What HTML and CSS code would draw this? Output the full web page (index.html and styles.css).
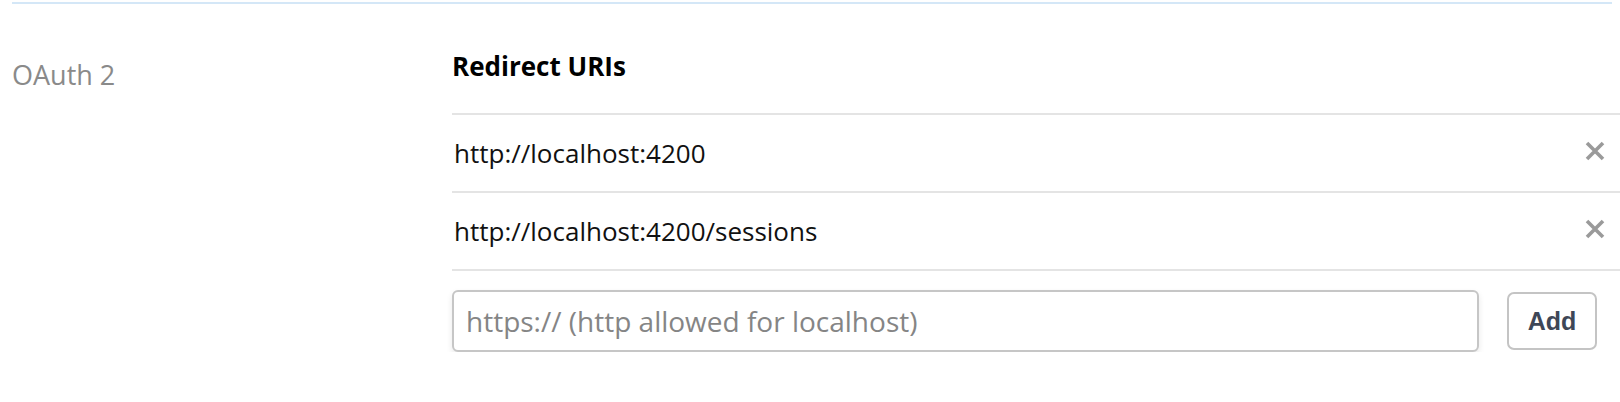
FILE: index.html
```html
<!DOCTYPE html>
<html lang="en">
<head>
<meta charset="utf-8">
<title>OAuth 2 Redirect URIs</title>
<link rel="stylesheet" href="styles.css">
</head>
<body>
<div class="top-rule"></div>
<section class="section">
  <div class="label">OAuth 2</div>
  <div class="content">
    <h3 class="heading">Redirect URIs</h3>
    <ul class="uri-list">
      <li class="uri-row">
        <span class="uri">http://localhost:4200</span>
        <button class="remove" type="button" aria-label="Remove">
          <svg viewBox="0 0 20 20" width="20" height="20"><path d="M2 2 L18 18 M18 2 L2 18" /></svg>
        </button>
      </li>
      <li class="uri-row">
        <span class="uri">http://localhost:4200/sessions</span>
        <button class="remove" type="button" aria-label="Remove">
          <svg viewBox="0 0 20 20" width="20" height="20"><path d="M2 2 L18 18 M18 2 L2 18" /></svg>
        </button>
      </li>
      <li class="add-row">
        <input class="uri-input" type="text" placeholder="https:// (http allowed for localhost)">
        <button class="add-btn" type="button">Add</button>
      </li>
    </ul>
  </div>
</section>
</body>
</html>
```

FILE: styles.css
```css
html, body {
  margin: 0;
  padding: 0;
  background: #ffffff;
  overflow: hidden;
}

body {
  font-family: "Open Sans", "Noto Sans", sans-serif;
  color: #111111;
}

.top-rule {
  height: 2px;
  margin: 2px 8px 0 12px;
  background: #d4e7f7;
}

.section {
  display: grid;
  grid-template-columns: 440px 1fr;
  padding: 46px 0 0 12px;
}

.label {
  margin-top: 7px;
  font-size: 27px;
  line-height: 36px;
  color: #8a8a8a;
}

.heading {
  margin: 0 0 31px 0;
  font-size: 26px;
  line-height: 32px;
  font-weight: 700;
  color: #000000;
}

.uri-list {
  list-style: none;
  margin: 0;
  padding: 0;
}

.uri-row {
  display: flex;
  align-items: center;
  justify-content: space-between;
  height: 76px;
  border-top: 2px solid #e4e4e4;
  padding: 0 15px 0 2px;
}

.uri {
  font-size: 26px;
  line-height: 36px;
  color: #111111;
}

.remove {
  display: flex;
  padding: 0;
  margin: 0 0 4px 0;
  border: 0;
  background: none;
  cursor: pointer;
}

.remove path {
  stroke: #9a9a9a;
  stroke-width: 3.6;
  fill: none;
}

.add-row {
  display: flex;
  align-items: center;
  gap: 28px;
  border-top: 2px solid #e4e4e4;
  padding: 19px 23px 0 0;
}

.uri-input {
  flex: 1;
  box-sizing: border-box;
  height: 62px;
  margin: 0;
  padding: 0 12px;
  border: 2px solid #c6c6c6;
  border-radius: 6px;
  box-shadow: 0 3px 6px rgba(0, 0, 0, 0.09);
  font-family: "Open Sans", "Noto Sans", sans-serif;
  font-size: 28px;
  color: #111111;
  outline: none;
}

.uri-input::placeholder {
  color: #858585;
}

.add-btn {
  box-sizing: border-box;
  width: 90px;
  height: 58px;
  margin: 0;
  padding: 0;
  border: 2px solid #c4c4c4;
  border-radius: 7px;
  background: #ffffff;
  font-family: "Liberation Sans", Arial, sans-serif;
  font-size: 25px;
  font-weight: 700;
  color: #3e4757;
  cursor: pointer;
}
```
